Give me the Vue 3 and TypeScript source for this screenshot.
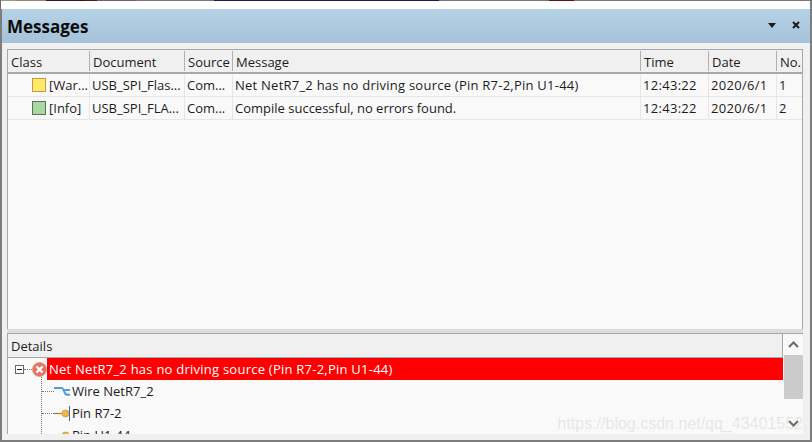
<script setup lang="ts">
interface Col { label: string; width: number }
const cols: Col[] = [
  { label: 'Class', width: 82 },
  { label: 'Document', width: 95 },
  { label: 'Source', width: 48 },
  { label: 'Message', width: 408 },
  { label: 'Time', width: 68 },
  { label: 'Date', width: 68 },
  { label: 'No.', width: 25 },
]
const rows = [
  { kind: 'warn', cls: '[War...', doc: 'USB_SPI_Flas...', src: 'Com...', msg: 'Net NetR7_2 has no driving source (Pin R7-2,Pin U1-44)', wide: true, time: '12:43:22', date: '2020/6/1', no: '1' },
  { kind: 'info', cls: '[Info]', doc: 'USB_SPI_FLA...', src: 'Com...', msg: 'Compile successful, no errors found.', wide: false, time: '12:43:22', date: '2020/6/1', no: '2' },
]
const strip = [
  { w: 15, c: '#9a9a88' },
  { w: 30, c: '#8f8878' },
  { w: 39, c: '#2a1a1e' },
  { w: 12, c: '#5a1418' },
  { w: 39, c: '#7c5a66' },
  { w: 78, c: '#777777' },
  { w: 225, c: '#1a1a52' },
  { w: 110, c: '#777777' },
  { w: 25, c: '#5a1418' },
  { w: 239, c: '#777777' },
]
</script>

<template>
  <div class="page">
    <div class="topstrip">
      <span v-for="(s, i) in strip" :key="i" :style="{ width: s.w + 'px', background: s.c }"></span>
    </div>
    <div class="window">
      <header class="titlebar">
        <h1>Messages</h1>
        <div class="controls">
          <svg width="8" height="5" viewBox="0 0 8 5"><path d="M0 0H8L4 5Z" fill="#1a1a1a" /></svg>
          <svg width="8" height="8" viewBox="0 0 8 8"><path d="M1 1L7 7M7 1L1 7" stroke="#1a1a1a" stroke-width="2" /></svg>
        </div>
      </header>
      <div class="body">
        <section class="list">
          <div class="row head">
            <div v-for="c in cols" :key="c.label" class="hcell" :style="{ width: c.width + 'px' }">{{ c.label }}</div>
          </div>
          <div v-for="r in rows" :key="r.no" class="row item">
            <div class="cell classcell" :style="{ width: cols[0].width + 'px' }">
              <span class="swatch" :class="r.kind"></span>{{ r.cls }}
            </div>
            <div class="cell" :style="{ width: cols[1].width + 'px' }">{{ r.doc }}</div>
            <div class="cell" :style="{ width: cols[2].width + 'px' }">{{ r.src }}</div>
            <div class="cell" :class="{ wide: r.wide }" :style="{ width: cols[3].width + 'px' }">{{ r.msg }}</div>
            <div class="cell num" :style="{ width: cols[4].width + 'px' }">{{ r.time }}</div>
            <div class="cell num" :style="{ width: cols[5].width + 'px' }">{{ r.date }}</div>
            <div class="cell" :style="{ width: cols[6].width + 'px' }">{{ r.no }}</div>
          </div>
        </section>
        <div class="splitter"></div>
        <section class="details">
          <div class="detailmain">
            <div class="dhead">Details</div>
            <div class="tree">
              <div class="guide"></div>
              <div class="node selected">
                <span class="expander"></span>
                <span class="hdots"></span>
                <svg class="erricon" width="15" height="15" viewBox="0 0 15 15">
                  <circle cx="7.5" cy="7.5" r="7" fill="#e8705f" stroke="#d8a48e" stroke-width="1" />
                  <path d="M4.4 4.4L10.6 10.6M10.6 4.4L4.4 10.6" stroke="#fff" stroke-width="2.2" />
                </svg>
                <span class="sel wide">Net NetR7_2 has no driving source (Pin R7-2,Pin U1-44)</span>
              </div>
              <div class="node child">
                <span class="cdots"></span>
                <svg class="icon" width="16" height="11" viewBox="0 0 16 11">
                  <path d="M0 2H8C10 2 10 8.8 13 8.8H16M10.5 4H16" fill="none" stroke="#4d9de0" stroke-width="2" />
                </svg>
                <span class="label">Wire NetR7_2</span>
              </div>
              <div class="node child">
                <span class="cdots"></span>
                <svg class="icon" width="16" height="15" viewBox="0 0 16 15">
                  <path d="M0 7.5H8" stroke="#a5802f" stroke-width="1.2" />
                  <circle cx="11.5" cy="7.5" r="3.5" fill="#f2b441" stroke="#c99a4a" stroke-width="0.8" />
                  <path d="M15.5 0V15" stroke="#1f6fb5" stroke-width="1" />
                </svg>
                <span class="label">Pin R7-2</span>
              </div>
              <div class="node child">
                <span class="cdots"></span>
                <svg class="icon" width="16" height="15" viewBox="0 0 16 15">
                  <path d="M0 7.5H8" stroke="#a5802f" stroke-width="1.2" />
                  <circle cx="11.5" cy="7.5" r="3.5" fill="#f2b441" stroke="#c99a4a" stroke-width="0.8" />
                </svg>
                <span class="label">Pin U1-44</span>
              </div>
            </div>
          </div>
          <aside class="scrollbar">
            <svg class="arrow" width="11" height="7" viewBox="0 0 11 7"><path d="M1 6L5.5 1.5L10 6" fill="none" stroke="#6b6b5e" stroke-width="2" /></svg>
            <div class="thumb"></div>
            <div class="spacer"></div>
            <svg class="arrow" width="11" height="7" viewBox="0 0 11 7"><path d="M1 1L5.5 5.5L10 1" fill="none" stroke="#6b6b5e" stroke-width="2" /></svg>
          </aside>
          <div class="watermark">https://blog.csdn.net/qq_43401552</div>
        </section>
      </div>
    </div>
  </div>
</template>

<style>
html, body { margin: 0; padding: 0; background: #fff; overflow: hidden; }
</style>

<style scoped>
.page {
  width: 812px;
  height: 442px;
  display: flex;
  flex-direction: column;
  overflow: hidden;
  font-family: "Open Sans", "Liberation Sans", sans-serif;
  color: #1c1c1c;
}
.topstrip {
  height: 9px;
  flex: none;
  box-sizing: border-box;
  display: flex;
  align-items: flex-start;
  background: #fff;
  border-left: 1px solid #6a6a6a;
  border-right: 2px solid #7d7d7d;
}
.topstrip span { height: 1px; flex: none; }
.window {
  flex: 1;
  min-height: 0;
  display: flex;
  flex-direction: column;
  background: #f0f0f0;
  border-style: solid;
  border-color: #7d7d7d;
  border-width: 0 2px 2px 2px;
}
.titlebar {
  height: 34px;
  flex: none;
  box-sizing: border-box;
  display: flex;
  align-items: center;
  justify-content: space-between;
  padding: 0 10px 0 5px;
  background: linear-gradient(#b5d2e6, #a5c2da);
}
.titlebar h1 {
  margin: 2px 0 0;
  font-size: 17px;
  font-weight: 700;
  line-height: 32px;
  color: #0c0c0c;
}
.controls {
  display: flex;
  align-items: center;
  gap: 16px;
  margin-bottom: 2px;
}
.body {
  flex: 1;
  min-height: 0;
  display: flex;
  flex-direction: column;
  padding: 6px 7px 6px 5px;
}
.list {
  flex: 1;
  min-height: 0;
  background: #f9f9f9;
  border: 1px solid #a8a8a8;
  border-bottom: 0;
}
.row { display: flex; }
.head {
  height: 24px;
  box-sizing: border-box;
  background: #f0f0f0;
  border-bottom: 2px solid #a8a8a8;
}
.hcell {
  box-sizing: border-box;
  font-size: 13px;
  line-height: 22px;
  padding-left: 3px;
  border-right: 1px solid #b0b0b0;
  white-space: nowrap;
  overflow: hidden;
  margin-top: 1px;
  height: 20px;
}
.hcell:last-child { border-right: 0; }
.item {
  height: 23px;
  box-sizing: border-box;
  border-bottom: 1px solid #e6e6e6;
}
.cell {
  box-sizing: border-box;
  font-size: 13px;
  line-height: 22px;
  padding-left: 2px;
  border-right: 1px solid #e6e6e6;
  white-space: nowrap;
  overflow: hidden;
}
.cell:last-child { border-right: 0; }
.wide { letter-spacing: 0.24px; }
.num { letter-spacing: 0.3px; }
.classcell {
  display: flex;
  align-items: center;
  padding-left: 24px;
}
.swatch {
  width: 14px;
  height: 14px;
  box-sizing: border-box;
  margin-right: 3px;
  flex: none;
}
.swatch.warn { background: #ffe96b; border: 1px solid #c49a45; }
.swatch.info { background: #a8d8a0; border: 1px solid #5f6f5c; }
.splitter { height: 4px; flex: none; background: #dcdcdc; }
.details {
  height: 101px;
  flex: none;
  box-sizing: border-box;
  position: relative;
  display: flex;
  background: #f9f9f9;
  border-top: 1px solid #a8a8a8;
  border-left: 1px solid #a8a8a8;
  overflow: hidden;
}
.detailmain { flex: 1; min-width: 0; }
.dhead {
  height: 24px;
  box-sizing: border-box;
  background: #f0f0f0;
  border-bottom: 1px solid #a8a8a8;
  border-right: 1px solid #a8a8a8;
  font-size: 13px;
  line-height: 24px;
  padding-left: 3px;
}
.tree {
  position: relative;
  height: 76px;
  overflow: hidden;
}
.guide {
  position: absolute;
  left: 33px;
  top: 19px;
  bottom: 0;
  border-left: 1px dotted #777;
}
.node {
  height: 22px;
  display: flex;
  align-items: center;
  white-space: nowrap;
  font-size: 13px;
}
.selected { padding-left: 7px; }
.expander {
  width: 7px;
  height: 7px;
  flex: none;
  border: 1px solid #666;
  background:
    linear-gradient(#222, #222) center / 5px 1px no-repeat,
    #fff;
}
.hdots { width: 8px; flex: none; border-top: 1px dotted #777; }
.erricon { flex: none; }
.sel {
  flex: 1;
  background: #ff0000;
  color: #fff;
  line-height: 22px;
  padding-left: 2px;
}
.child { padding-left: 34px; }
.cdots { width: 12px; flex: none; border-top: 1px dotted #777; }
.icon { flex: none; }
.label { margin-left: 2px; }
.scrollbar {
  width: 20px;
  flex: none;
  display: flex;
  flex-direction: column;
  align-items: center;
  background: #f9f9f9;
}
.arrow { flex: none; margin: 7px 0; }
.thumb { width: 19px; height: 44px; background: #cbcbcb; flex: none; }
.spacer { flex: 1; }
.watermark {
  position: absolute;
  right: 0;
  bottom: 1px;
  font-family: "Liberation Sans", sans-serif;
  font-size: 16px;
  color: rgba(150, 150, 150, 0.2);
  pointer-events: none;
  white-space: nowrap;
}
</style>
